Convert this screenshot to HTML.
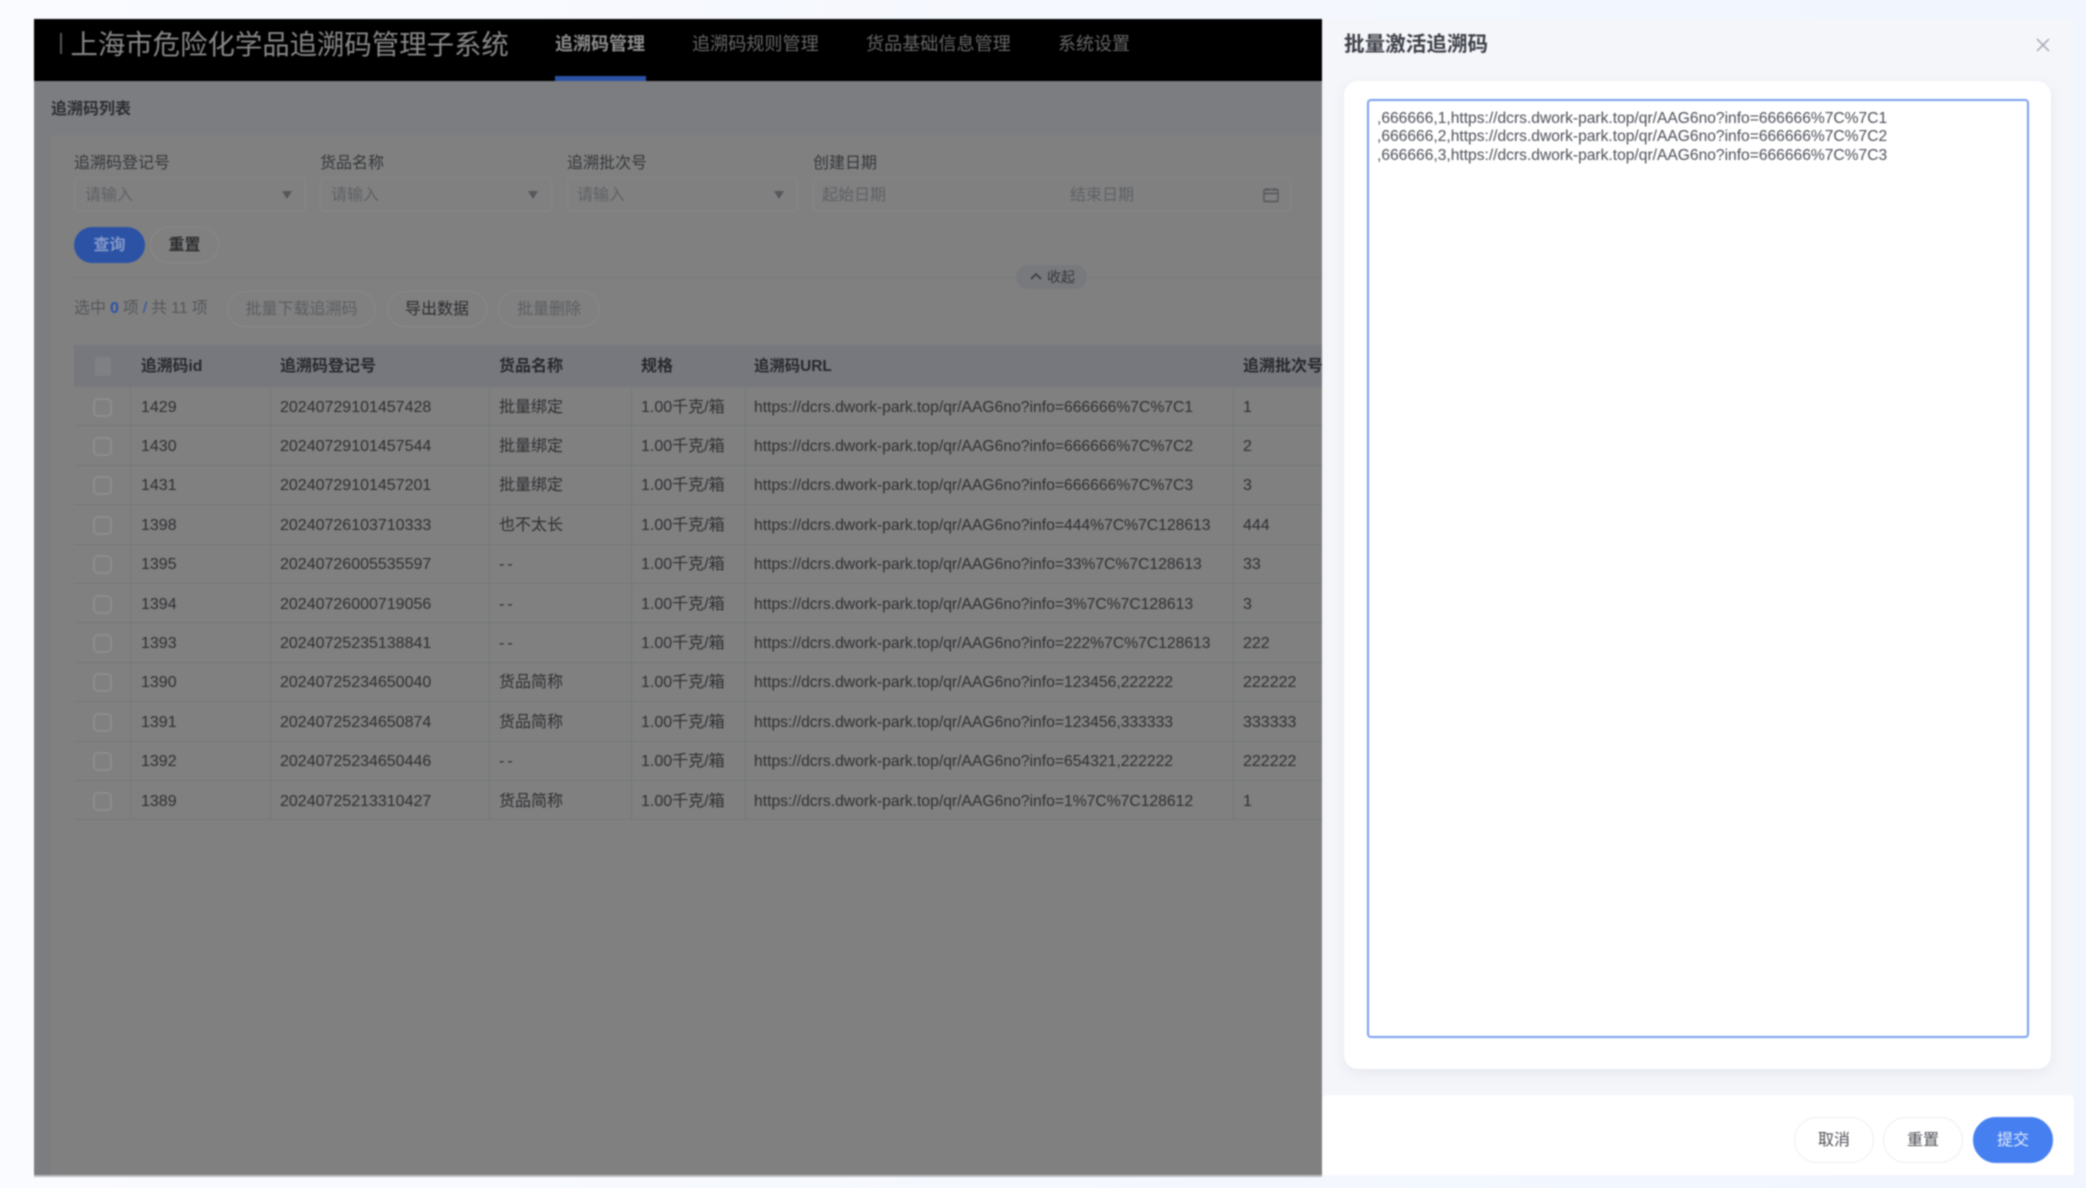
<!DOCTYPE html>
<html lang="zh-CN"><head><meta charset="utf-8"><title>批量激活追溯码</title>
<style>
*{box-sizing:border-box}
html,body{margin:0;padding:0}
body{width:2086px;height:1188px;overflow:hidden;position:relative;background:linear-gradient(90deg,#fafbff,#f0f5fe);font-family:"Liberation Sans","Noto Sans CJK SC",sans-serif;color:#3a3b3d}
#root{position:absolute;inset:0;filter:blur(.85px)}
.a{position:absolute;white-space:nowrap}
.t{position:absolute;white-space:nowrap;line-height:20px;font-size:16px}
.lb{top:154px;color:#35373a}
.inp{top:177px;height:35px;border:1px solid #86878a;border-radius:4px;background:#808080}
.ph{top:186px;color:#5f6165}
.arr{top:191px;width:0;height:0;border-left:5px solid transparent;border-right:5px solid transparent;border-top:8px solid #55575b}
.btn{border:1px solid #88898b;border-radius:18px;height:36px;top:291px;text-align:center;line-height:36px;font-size:16px;color:#5c5e62}
.r{position:absolute;left:74px;width:1248px;height:39.4px;border-bottom:1px solid #74767a}
.r span{position:absolute;top:10.500px;line-height:20px;font-size:16px;white-space:nowrap;color:#2e2f32}
.r i{position:absolute;left:19px;top:10.500px;width:19px;height:19px;border:2px solid #8b8c8e;border-radius:5px}
.r .s1{left:67px}.r .s2{left:206px}.r .s3{left:425px}.r .s4{left:567px}.r .s5{left:680px;font-size:15.7px}.r .s6{left:1169px}
.v{position:absolute;top:345px;height:475px;width:1px;background:#75777b}
.fb{position:absolute;top:1117px;height:46px;width:80px;border-radius:23px;text-align:center;line-height:46px;font-size:16px;border:1px solid #eeeff2;color:#4f5157;background:#fff}
.h{top:357px;font-weight:bold;color:#26282c}
</style></head>
<body><div id="root">
<!-- main -->
<div class="a" style="left:34px;top:19px;width:1288px;height:1156px;background:#808080;overflow:hidden"></div>
<div class="a" style="left:34px;top:81px;width:1288px;height:54px;background:#7b7d80"></div>
<div class="a" style="left:34px;top:81px;width:17px;height:1094px;background:#7b7d80"></div>
<div class="a" style="left:51px;top:135px;width:1271px;height:1040px;background:#808080;border-radius:10px 0 0 0"></div>
<div class="a" style="left:34px;top:1175px;width:1288px;height:2px;background:#bbbcc0"></div>
<!-- header -->
<div class="a" style="left:34px;top:19px;width:1288px;height:62px;background:#000"></div>
<div class="a" style="left:60px;top:33px;width:2px;height:21px;background:#555"></div>
<div class="t" style="left:70.500px;top:25px;font-size:27.4px;line-height:40px;color:#888">上海市危险化学品追溯码管理子系统</div>
<div class="t" style="left:555px;top:31.500px;font-size:18px;line-height:24px;color:#8e8e8e;font-weight:bold">追溯码管理</div>
<div class="a" style="left:555px;top:76px;width:91px;height:5px;background:#2b52a5"></div>
<div class="t" style="left:692px;top:32px;font-size:18.1px;line-height:24px;color:#666">追溯码规则管理</div>
<div class="t" style="left:866px;top:32px;font-size:18.1px;line-height:24px;color:#666">货品基础信息管理</div>
<div class="t" style="left:1058px;top:32px;font-size:18px;line-height:24px;color:#666">系统设置</div>
<!-- breadcrumb -->
<div class="t" style="left:51px;top:99.500px;font-size:16px;font-weight:bold;color:#2b2d31">追溯码列表</div>
<!-- filters -->
<div class="t lb" style="left:74px">追溯码登记号</div>
<div class="t lb" style="left:320px">货品名称</div>
<div class="t lb" style="left:567px">追溯批次号</div>
<div class="t lb" style="left:813px">创建日期</div>
<div class="a inp" style="left:74px;width:232px"></div>
<div class="a inp" style="left:320px;width:232px"></div>
<div class="a inp" style="left:567px;width:231px"></div>
<div class="a inp" style="left:813px;width:478px"></div>
<div class="t ph" style="left:85px">请输入</div>
<div class="t ph" style="left:331px">请输入</div>
<div class="t ph" style="left:577px">请输入</div>
<div class="t ph" style="left:822px">起始日期</div>
<div class="t ph" style="left:1070px">结束日期</div>
<div class="a arr" style="left:282px"></div>
<div class="a arr" style="left:528px"></div>
<div class="a arr" style="left:774px"></div>
<svg class="a" style="left:1263px;top:187px" width="16" height="16" viewBox="0 0 16 16" fill="none" stroke="#54565a" stroke-width="1.4"><rect x="1" y="2.5" width="14" height="12" rx="1"/><path d="M1 6.5h14M4.500 1v3M11.500 1v3"/></svg>
<div class="a" style="left:74px;top:227px;width:71px;height:36px;border-radius:18px;background:#2b52a5;color:#8398c8;text-align:center;line-height:37px;font-size:16px;font-weight:bold">查询</div>
<div class="a" style="left:150px;top:227px;width:69px;height:36px;border-radius:18px;border:1px solid #88898b;color:#2b2c2f;text-align:center;line-height:36px;font-size:16px;font-weight:bold">重置</div>
<div class="a" style="left:74px;top:277px;width:1248px;height:1px;background:#797b7e"></div>
<div class="a" style="left:1016px;top:265px;width:71px;height:24px;border-radius:12px;background:#77797c;color:#35373b;font-size:14px;line-height:24px;padding-left:31px">收起</div>
<svg class="a" style="left:1029px;top:271px" width="14" height="10" viewBox="0 0 14 10" fill="none" stroke="#3a3c40" stroke-width="1.600"><path d="M2 8l5-5 5 5"/></svg>
<!-- toolbar -->
<div class="t" style="left:74px;top:299px;color:#55575b;word-spacing:-.5px">选中 <b style="color:#2b52a5;font-weight:bold">0</b> 项 <span style="color:#2b52a5">/</span> 共 11 项</div>
<div class="a btn" style="left:227px;width:149px">批量下载追溯码</div>
<div class="a btn" style="left:387px;width:100px;color:#2b2c2f">导出数据</div>
<div class="a btn" style="left:498px;width:102px">批量删除</div>
<!-- table -->
<div class="a" style="left:74px;top:345px;width:1248px;height:42px;background:#76787d"></div>
<div class="v" style="left:130px"></div><div class="v" style="left:270px"></div><div class="v" style="left:489px"></div><div class="v" style="left:631px"></div><div class="v" style="left:745px"></div><div class="v" style="left:1233px"></div>
<div class="a" style="left:95px;top:357px;width:16px;height:19px;background:#7e8083;border-radius:3px"></div>
<div class="t h" style="left:141px;font-size:15.8px">追溯码id</div>
<div class="t h" style="left:280px">追溯码登记号</div>
<div class="t h" style="left:499px">货品名称</div>
<div class="t h" style="left:641px">规格</div>
<div class="t h" style="left:754px;font-size:15.4px">追溯码URL</div>
<div class="a" style="left:1243px;top:345px;width:79px;height:42px;overflow:hidden;font-size:16px;line-height:20px;padding-top:12px;font-weight:bold;color:#26282c">追溯批次号</div>

<div class="r" style="top:387px"><i></i><span class="s1">1429</span><span class="s2">20240729101457428</span><span class="s3">批量绑定</span><span class="s4">1.00千克/箱</span><span class="s5">https://dcrs.dwork-park.top/qr/AAG6no?info=666666%7C%7C1</span><span class="s6">1</span></div>
<div class="r" style="top:426.4px"><i></i><span class="s1">1430</span><span class="s2">20240729101457544</span><span class="s3">批量绑定</span><span class="s4">1.00千克/箱</span><span class="s5">https://dcrs.dwork-park.top/qr/AAG6no?info=666666%7C%7C2</span><span class="s6">2</span></div>
<div class="r" style="top:465.8px"><i></i><span class="s1">1431</span><span class="s2">20240729101457201</span><span class="s3">批量绑定</span><span class="s4">1.00千克/箱</span><span class="s5">https://dcrs.dwork-park.top/qr/AAG6no?info=666666%7C%7C3</span><span class="s6">3</span></div>
<div class="r" style="top:505.2px"><i></i><span class="s1">1398</span><span class="s2">20240726103710333</span><span class="s3">也不太长</span><span class="s4">1.00千克/箱</span><span class="s5">https://dcrs.dwork-park.top/qr/AAG6no?info=444%7C%7C128613</span><span class="s6">444</span></div>
<div class="r" style="top:544.6px"><i></i><span class="s1">1395</span><span class="s2">20240726005535597</span><span class="s3" style="letter-spacing:3px">--</span><span class="s4">1.00千克/箱</span><span class="s5">https://dcrs.dwork-park.top/qr/AAG6no?info=33%7C%7C128613</span><span class="s6">33</span></div>
<div class="r" style="top:584px"><i></i><span class="s1">1394</span><span class="s2">20240726000719056</span><span class="s3" style="letter-spacing:3px">--</span><span class="s4">1.00千克/箱</span><span class="s5">https://dcrs.dwork-park.top/qr/AAG6no?info=3%7C%7C128613</span><span class="s6">3</span></div>
<div class="r" style="top:623.4px"><i></i><span class="s1">1393</span><span class="s2">20240725235138841</span><span class="s3" style="letter-spacing:3px">--</span><span class="s4">1.00千克/箱</span><span class="s5">https://dcrs.dwork-park.top/qr/AAG6no?info=222%7C%7C128613</span><span class="s6">222</span></div>
<div class="r" style="top:662.8px"><i></i><span class="s1">1390</span><span class="s2">20240725234650040</span><span class="s3">货品简称</span><span class="s4">1.00千克/箱</span><span class="s5">https://dcrs.dwork-park.top/qr/AAG6no?info=123456,222222</span><span class="s6">222222</span></div>
<div class="r" style="top:702.2px"><i></i><span class="s1">1391</span><span class="s2">20240725234650874</span><span class="s3">货品简称</span><span class="s4">1.00千克/箱</span><span class="s5">https://dcrs.dwork-park.top/qr/AAG6no?info=123456,333333</span><span class="s6">333333</span></div>
<div class="r" style="top:741.6px"><i></i><span class="s1">1392</span><span class="s2">20240725234650446</span><span class="s3" style="letter-spacing:3px">--</span><span class="s4">1.00千克/箱</span><span class="s5">https://dcrs.dwork-park.top/qr/AAG6no?info=654321,222222</span><span class="s6">222222</span></div>
<div class="r" style="top:781px"><i></i><span class="s1">1389</span><span class="s2">20240725213310427</span><span class="s3">货品简称</span><span class="s4">1.00千克/箱</span><span class="s5">https://dcrs.dwork-park.top/qr/AAG6no?info=1%7C%7C128612</span><span class="s6">1</span></div>

<!-- drawer -->
<div class="a" style="left:1322px;top:19px;width:752px;height:1156px;background:#f5f6fa"></div>
<div class="t" style="left:1344px;top:31px;font-size:20.6px;line-height:28px;font-weight:bold;color:#3d4048">批量激活追溯码</div>
<svg class="a" style="left:2035px;top:37px" width="16" height="16" viewBox="0 0 16 16" fill="none" stroke="#a3a7b0" stroke-width="1.500"><path d="M2 2l12 12M14 2L2 14"/></svg>
<div class="a" style="left:1344px;top:81px;width:707px;height:988px;background:#fff;border-radius:14px;box-shadow:0 4px 12px rgba(200,205,220,.35)"></div>
<div class="a" style="left:1367px;top:99px;width:662px;height:939px;border:2px solid #7aa0ee;border-radius:4px;background:#fff"></div>
<div class="a" style="left:1377px;top:109.500px;font-size:15.6px;line-height:18.500px;color:#4c4f58">,666666,1,https://dcrs.dwork-park.top/qr/AAG6no?info=666666%7C%7C1<br>,666666,2,https://dcrs.dwork-park.top/qr/AAG6no?info=666666%7C%7C2<br>,666666,3,https://dcrs.dwork-park.top/qr/AAG6no?info=666666%7C%7C3</div>
<div class="a" style="left:1322px;top:1095px;width:752px;height:80px;background:#fff;border-radius:6px 6px 0 0"></div>
<div class="fb" style="left:1794px">取消</div>
<div class="fb" style="left:1883px">重置</div>
<div class="fb" style="left:1973px;background:#4680f0;border-color:#4680f0;color:#dfe8fb">提交</div>
</div></body></html>
